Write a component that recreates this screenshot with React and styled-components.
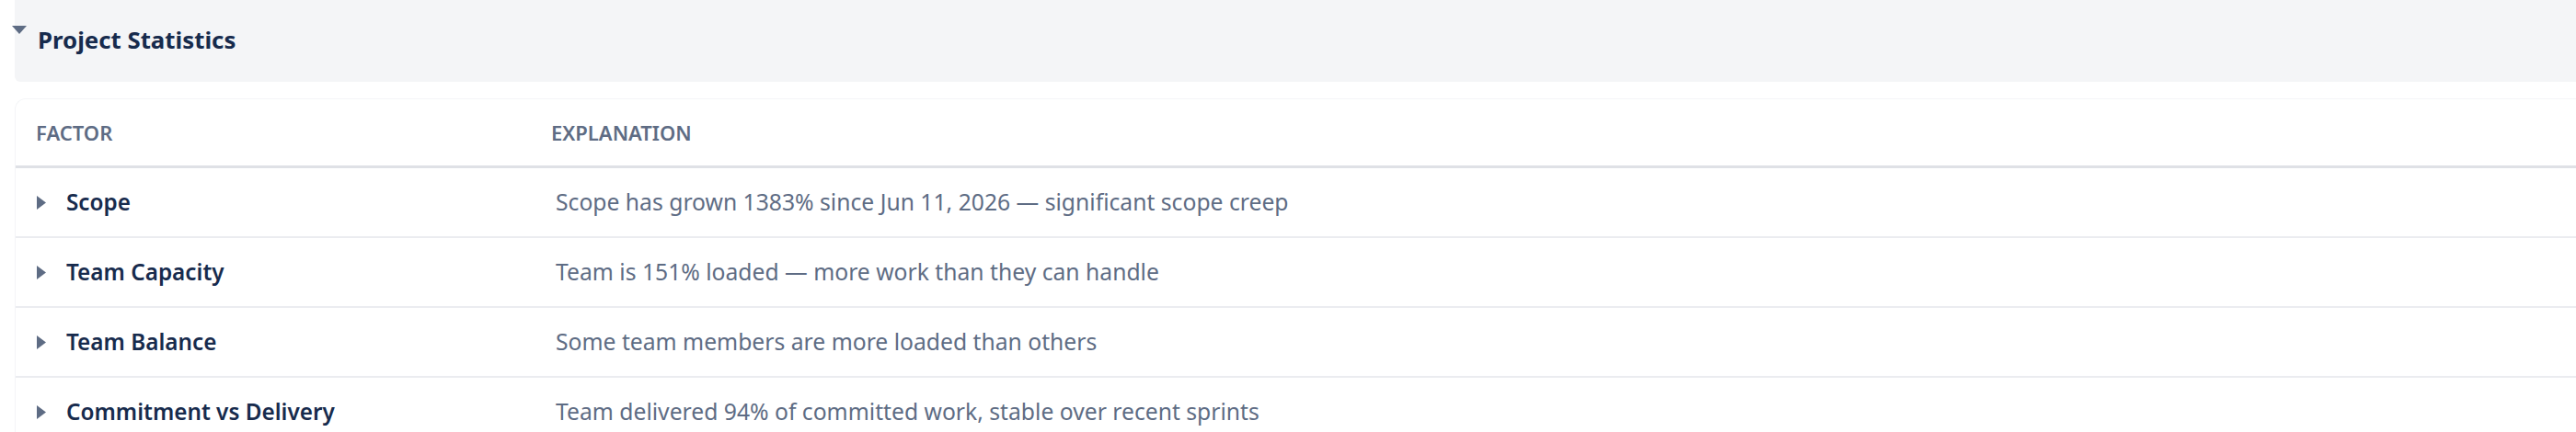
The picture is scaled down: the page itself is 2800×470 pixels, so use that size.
import {useState} from 'react'
import styled, {createGlobalStyle} from 'styled-components'

const factors = [
  {name: 'Scope', text: 'Scope has grown 1383% since Jun 11, 2026 — significant scope creep'},
  {name: 'Team Capacity', text: 'Team is 151% loaded — more work than they can handle'},
  {name: 'Team Balance', text: 'Some team members are more loaded than others'},
  {name: 'Commitment vs Delivery', text: 'Team delivered 94% of committed work, stable over recent sprints'},
]

const Caret = ({open}) => (
  open
    ? <DownCaret viewBox="0 0 16 9"><path d="M0 0h16L8 9z" fill="currentColor" /></DownCaret>
    : <RightCaret viewBox="0 0 10 15"><path d="M0 0l10 7.5L0 15z" fill="currentColor" /></RightCaret>
)

const App = () => {
  const [open, setOpen] = useState(true)
  const [expanded, setExpanded] = useState({})
  return (
    <>
      <GlobalStyle />
      <Page>
        <Summary onClick={() => setOpen(!open)}>
          <Caret open={open} />
          <Title>Project Statistics</Title>
        </Summary>
        {open && (
          <Card>
            <HeadRow>
              <HeadCell>Factor</HeadCell>
              <HeadCell>Explanation</HeadCell>
            </HeadRow>
            {factors.map(f => (
              <Row key={f.name} onClick={() => setExpanded({...expanded, [f.name]: !expanded[f.name]})}>
                <FactorCell>
                  <Caret open={false} />
                  <Label>{f.name}</Label>
                </FactorCell>
                <Explain>{f.text}</Explain>
              </Row>
            ))}
          </Card>
        )}
      </Page>
    </>
  )
}

const GlobalStyle = createGlobalStyle`
  body {
    margin: 0;
    background: #fff;
    overflow: hidden;
    font-family: "Noto Sans", "Open Sans", sans-serif;
  }
`
const Page = styled.div`
  padding-left: 16px;
  width: calc(100% + 20px);
`
const Summary = styled.div`
  display: flex;
  align-items: flex-start;
  height: 89px;
  background: #f4f5f7;
  border-radius: 0 0 0 6px;
  cursor: pointer;
`
const DownCaret = styled.svg`
  flex: none;
  width: 16px;
  height: 9px;
  margin: 28px 12px 0 -3px;
  color: #5e6c84;
`
const RightCaret = styled.svg`
  flex: none;
  width: 10px;
  height: 15px;
  color: #5e6c84;
`
const Title = styled.span`
  font-size: 25.8px;
  font-weight: 700;
  line-height: 87px;
  color: #172b4d;
`
const Card = styled.div`
  margin-top: 18px;
  background: #fff;
  border: 1px solid #f4f5f7;
  border-right: none;
  border-bottom: none;
  border-top-left-radius: 12px;
`
const HeadRow = styled.div`
  display: grid;
  grid-template-columns: 560px 1fr;
  height: 72px;
  border-bottom: 3px solid #dfe1e6;
`
const HeadCell = styled.div`
  display: flex;
  align-items: center;
  padding: 0 22px;
  font-size: 22px;
  font-weight: 600;
  text-transform: uppercase;
  color: #5e6c84;
`
const Row = styled.div`
  display: grid;
  grid-template-columns: 560px 1fr;
  height: 74px;
  border-bottom: 2px solid #ebecf0;
  cursor: pointer;
`
const FactorCell = styled.div`
  display: flex;
  align-items: center;
  gap: 22px;
  padding-left: 23px;
`
const Label = styled.span`
  font-size: 24.3px;
  font-weight: 600;
  line-height: 1.2;
  color: #172b4d;
`
const Explain = styled.div`
  display: flex;
  align-items: center;
  padding-left: 27px;
  font-size: 24.7px;
  line-height: 1.2;
  color: #5e6c84;
`

export default App
